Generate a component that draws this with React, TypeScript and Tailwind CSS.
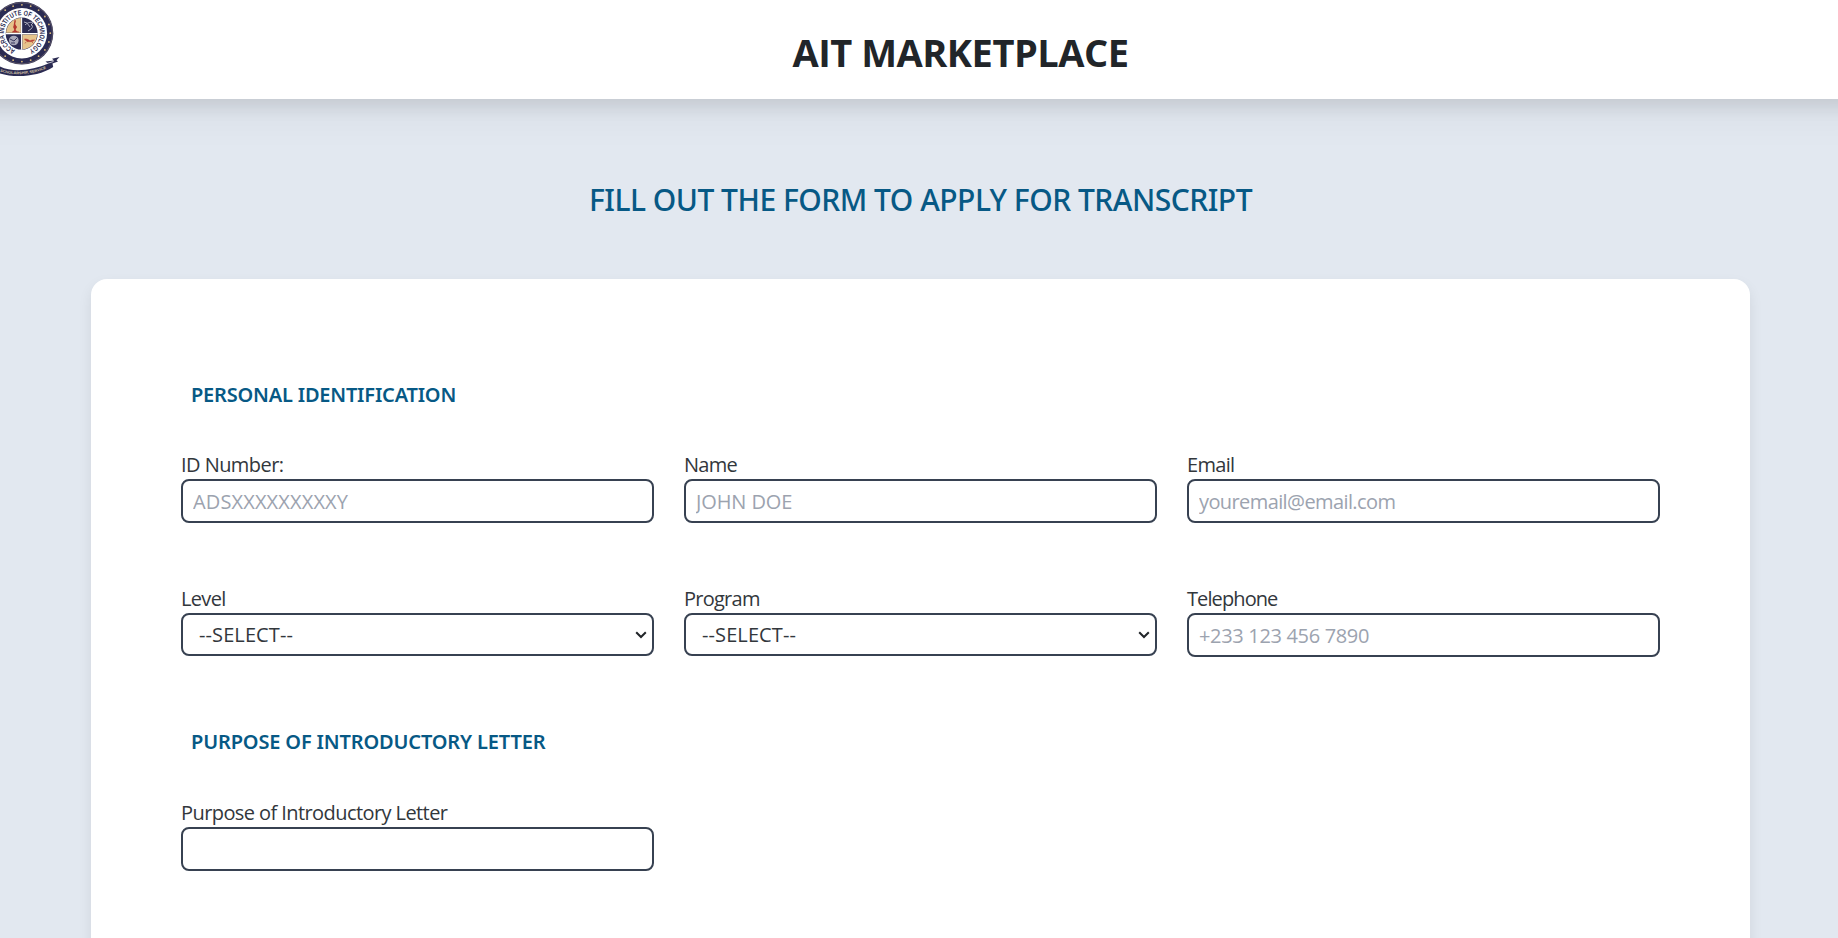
import type { ReactNode } from "react";

const control =
  "w-full rounded-lg border-2 border-[#374151] bg-white text-[20px] text-[#32373c] outline-none placeholder:text-[#9ca3af] placeholder:opacity-100";

function Crest() {
  const dots = Array.from({ length: 20 }, (_, i) => {
    const a = (i / 20) * Math.PI * 2;
    return { x: 21.9 + Math.cos(a) * 28.4, y: 33.2 + Math.sin(a) * 28.4 };
  });
  return (
    <svg viewBox="0 0 62 80" className="h-20 w-[62px] shrink-0" aria-hidden="true">
      <circle cx="21.9" cy="33.2" r="31.4" fill="#2b2b52" />
      <circle cx="21.9" cy="33.2" r="30.6" fill="none" stroke="#8d7f78" strokeWidth="0.5" />
      {dots.map((d) => (
        <circle key={`${d.x}-${d.y}`} cx={d.x} cy={d.y} r="0.9" fill="#d9b878" />
      ))}
      <circle cx="21.9" cy="33.2" r="25.2" fill="#ffffff" />
      <defs>
        <path id="crestTop" d="M15.1 49.9A18 18 0 1 1 28.6 49.9" />
        <path id="crestMotto" d="M0 71.6C16 76.5 35 74 50 66.8" />
      </defs>
      <text fontSize="7.2" fontWeight="700" fill="#2b2b52" fontFamily="Liberation Sans, sans-serif">
        <textPath href="#crestTop" textLength="98" lengthAdjust="spacingAndGlyphs">
          ACCRA INSTITUTE OF TECHNOLOGY
        </textPath>
      </text>
      <circle cx="21.7" cy="33.6" r="16" fill="#2b2b52" />
      <path d="M20.9 32.8V18A15.4 15.4 0 0 0 6.100 32.8Z" fill="#e6c48c" />
      <path d="M22.4 34.4V49.2A15.4 15.4 0 0 0 37.200 34.4Z" fill="#e6c48c" />
      <path d="M21.6 17.4V49.8M5.6 33.6H37.8" stroke="#ffffff" strokeWidth="1.1" />
      <path d="M14.500 20l1.500.5-.8 3.500 1.600 3-1.200 3 2.400 2h-5.500l1.700-2-.8-3z" fill="#b5372f" />
      <path d="M12 32h7M13 27h4" stroke="#b5372f" strokeWidth="0.8" />
      <path
        d="M25 25c3-3 6-3 8-2l-2 2c2 0 2 2 0 4l-3 2M27 23l3 4M24 22l3 1"
        fill="none"
        stroke="#a9a9ba"
        strokeWidth="1"
      />
      <circle cx="13.8" cy="40.5" r="4.8" fill="#a9a9ba" />
      <path d="M10 39l4 2 3-3M11 43h4" stroke="#2b2b52" strokeWidth="0.9" fill="none" />
      <path
        d="M24.500 39c3 0 4.500 1 5.500 2 1-1 3-1 4.500-1l-2.500 1.600h-5zM26 42l-1 1.500M32 42l1.500 1.500"
        fill="#b5372f"
        stroke="#b5372f"
        strokeWidth="0.6"
      />
      <path
        d="M0 66.5C13 73 34 70 48 63.5L45.5 61.5L54 60.5L52 58.8L59.5 57L56.5 60.3L58 61.5L52.5 63.5L53.2 67C38 77 15 78 0 73.5Z"
        fill="#2b2b52"
      />
      <path d="M46 63.8L53.5 61.5" stroke="#ffffff" strokeWidth="0.7" />
      <text fontSize="3.6" fontWeight="700" fill="#d9c8a8" fontFamily="Liberation Sans, sans-serif">
        <textPath href="#crestMotto" textLength="47" lengthAdjust="spacingAndGlyphs">
          SCHOLARSHIP, SERVICE
        </textPath>
      </text>
    </svg>
  );
}

function Field({ label, tracking, children }: { label: string; tracking: string; children: ReactNode }) {
  return (
    <label className="flex flex-col">
      <span className={`h-[30px] pt-px text-[20px] leading-[30px] whitespace-nowrap text-[#32373c] ${tracking}`}>
        {label}
      </span>
      {children}
    </label>
  );
}

function SelectField({ label, tracking }: { label: string; tracking: string }) {
  return (
    <Field label={label} tracking={tracking}>
      <span className="relative block h-[43px]">
        <select className={`${control} h-[43px] appearance-none pr-8 pl-4 tracking-[0.1px]`}>
          <option>--SELECT--</option>
        </select>
        <svg viewBox="0 0 12 8" className="pointer-events-none absolute top-[18px] right-[7px] h-2 w-3" aria-hidden="true">
          <path d="M1.2 1.2L6 6L10.8 1.2" fill="none" stroke="#212529" strokeWidth="2" />
        </svg>
      </span>
    </Field>
  );
}

function SectionTitle({ children, tracking }: { children: ReactNode; tracking: string }) {
  return (
    <h3
      className={`pl-[10px] font-['Noto_Sans',sans-serif] text-[20px] leading-[30px] font-semibold text-[#075985] ${tracking}`}
    >
      {children}
    </h3>
  );
}

export default function App() {
  return (
    <div className="flex h-screen flex-col overflow-hidden bg-[#e2e8f0] font-['Open_Sans','Noto_Sans',sans-serif] text-[#212529]">
      <header className="z-10 flex h-[99px] shrink-0 items-start bg-white shadow-[0_-24px_16px_32px_rgba(0,0,0,0.09),0_-24px_40px_40px_rgba(0,0,0,0.05)]">
        <Crest />
        <h1 className="mr-[-21px] flex-1 pt-[27px] text-center text-[38px] leading-[50px] font-bold tracking-[-0.5px]">
          AIT MARKETPLACE
        </h1>
      </header>

      <main className="flex min-h-0 flex-1 flex-col pr-[88px] pl-[91px]">
        <h2 className="mt-[79px] text-center font-['Noto_Sans',sans-serif] text-[30px] leading-[44px] font-medium tracking-[-0.5px] text-[#075985]">
          FILL OUT THE FORM TO APPLY FOR TRANSCRIPT
        </h2>

        <form className="mt-[57px] h-[900px] shrink-0 rounded-2xl bg-white px-[90px] pt-[101px] shadow-[0_6px_14px_rgba(0,0,0,0.08)]">
          <SectionTitle tracking="tracking-[-0.2px]">PERSONAL IDENTIFICATION</SectionTitle>
          <div className="mt-[39px] grid grid-cols-3 gap-x-[30px] gap-y-[60px]">
            <Field label="ID Number:" tracking="tracking-[-0.55px]">
              <input className={`${control} h-[44px] px-[10px] tracking-[0.14px]`} placeholder="ADSXXXXXXXXXY" />
            </Field>
            <Field label="Name" tracking="tracking-[-0.7px]">
              <input className={`${control} h-[44px] px-[10px] tracking-[-0.1px]`} placeholder="JOHN DOE" />
            </Field>
            <Field label="Email" tracking="tracking-[-0.7px]">
              <input className={`${control} h-[44px] px-[10px] tracking-[-0.6px]`} placeholder="youremail@email.com" />
            </Field>
            <SelectField label="Level" tracking="tracking-[-0.65px]" />
            <SelectField label="Program" tracking="tracking-[-0.75px]" />
            <Field label="Telephone" tracking="tracking-[-0.9px]">
              <input className={`${control} h-[44px] px-[10px] tracking-[-0.33px]`} placeholder="+233 123 456 7890" />
            </Field>
          </div>

          <div className="mt-[70px]">
            <SectionTitle tracking="tracking-[-0.15px]">PURPOSE OF INTRODUCTORY LETTER</SectionTitle>
          </div>
          <div className="mt-[40px] grid grid-cols-3 gap-x-[30px]">
            <Field label="Purpose of Introductory Letter" tracking="tracking-[-0.58px]">
              <input className={`${control} h-[44px] px-[10px]`} />
            </Field>
          </div>
        </form>
      </main>
    </div>
  );
}
